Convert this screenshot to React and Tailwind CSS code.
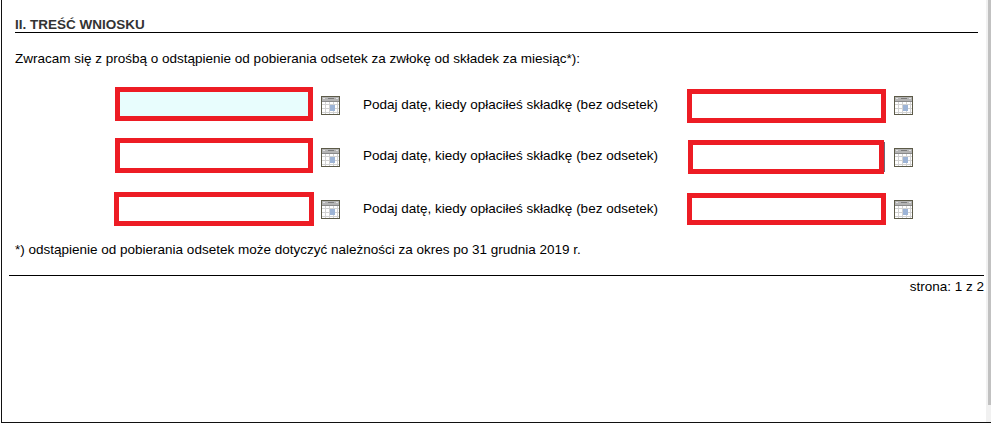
const font = "font-['Liberation_Sans',Arial,sans-serif]";

function Cal() {
  const xs = [4, 8, 12, 16];
  const ys = [8, 12, 16];
  return (
    <svg width="19" height="19" viewBox="0 0 19 19" className="mt-[9px] shrink-0" shapeRendering="crispEdges">
      <rect x="0" y="0" width="19" height="19" fill="#5c5a48" />
      <rect x="1" y="1" width="17" height="17" fill="#ffffff" />
      <rect x="1" y="1" width="17" height="4" fill="#b4b4b4" />
      <rect x="7" y="2" width="6" height="1" fill="#7c7c7c" />
      <rect x="2" y="2" width="2" height="1" fill="#e2e2e2" />
      <rect x="15" y="2" width="2" height="1" fill="#e2e2e2" />
      <rect x="1" y="5" width="17" height="1" fill="#8a8a8a" />
      {xs.map((x) => <rect key={x} x={x} y="6" width="1" height="12" fill="#d2d2d2" />)}
      {ys.map((y) => <rect key={y} x="1" y={y} width="17" height="1" fill="#d2d2d2" />)}
      <rect x="9" y="9" width="5" height="6" fill="#9db4d6" />
    </svg>
  );
}

const Label = ({ className }) => (
  <span className={`ml-[23px] w-[324px] whitespace-nowrap shrink-0 ${className}`}>
    Podaj datę, kiedy opłaciłeś składkę (bez odsetek)
  </span>
);

const red = "border-[5px] border-[#ed1c24] shrink-0";

export default function App() {
  return (
    <div className={`${font} w-[991px] h-[427px] bg-white text-[13.5px] leading-[16px] text-black overflow-hidden`}>
      <div className="ml-px w-[990px] h-[423px] border-l border-b border-[#111] flex">
        <div className="flex-1 min-w-0 pl-px">
          <div className="ml-[12px] w-[963px] h-[33px] pt-[17px] leading-[15px] border-b border-black font-bold text-[#333]">II. TREŚĆ WNIOSKU</div>
          <p className="ml-[12px] mt-[18px]">Zwracam się z prośbą o odstąpienie od pobierania odsetek za zwłokę od składek za miesiąc*):</p>
          <div className="mt-[20px] flex flex-col">
            <div className="flex items-start h-[52px]">
              <div className={`${red} ml-[112px] mr-[8px] w-[198px] h-[34px] bg-[#e8fdfd]`} />
              <Cal />
              <Label className="mt-[10px]" />
              <div className={`${red} mt-[2px] mr-[8px] w-[199px] h-[34px]`} />
              <Cal />
            </div>
            <div className="flex items-start h-[52px]">
              <div className={`${red} -mt-px ml-[112px] mr-[8px] w-[198px] h-[35px]`} />
              <Cal />
              <Label className="mt-[9px]" />
              <div className={`${red} ml-px mt-px w-[196px] h-[34px]`} />
              <div className="mt-[3px] mr-[9px] w-px h-[30px] bg-[#6a6a7a] shrink-0" />
              <Cal />
            </div>
            <div className="flex items-start h-[48px]">
              <div className={`${red} mt-px ml-[111px] mr-[7px] w-[200px] h-[34px]`} />
              <Cal />
              <Label className="mt-[10px]" />
              <div className={`${red} mt-[2px] mr-[8px] w-[199px] h-[32px]`} />
              <Cal />
            </div>
          </div>
          <p className="ml-[12px] mt-[3px]">*) odstąpienie od pobierania odsetek może dotyczyć należności za okres po 31 grudnia 2019 r.</p>
          <div className="ml-[6px] mt-[17px] w-[975px] border-t border-black pt-[3px] text-right">strona: 1 z 2</div>
        </div>
        <div className="w-[5px] bg-[#f1f1f1] pl-[2px] shrink-0">
          <div className="w-[3px] h-[405px] bg-[#c1c1c1]" />
        </div>
      </div>
    </div>
  );
}
